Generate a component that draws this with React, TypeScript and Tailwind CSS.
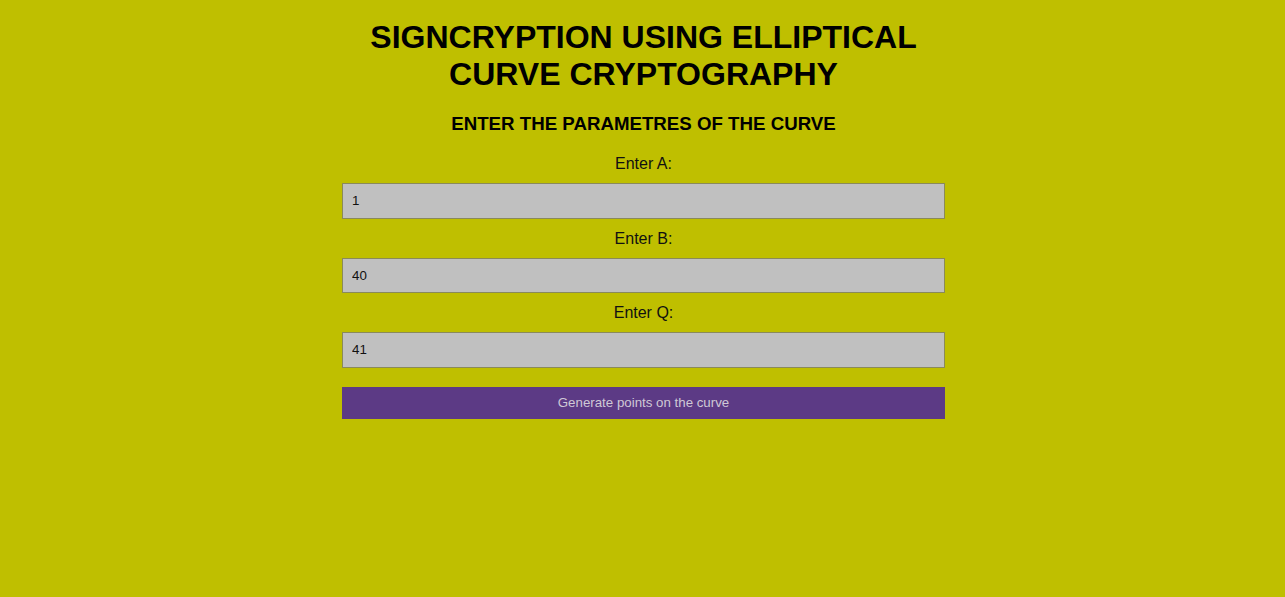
import React, { useState } from 'react';

const fields = [
    { id: 'a', label: 'Enter A:' },
    { id: 'b', label: 'Enter B:' },
    { id: 'q', label: 'Enter Q:' },
];

const App = () => {
    const [values, setValues] = useState<Record<string, string>>({ a: '1', b: '40', q: '41' });

    return (
        <div className="min-h-screen w-full bg-[#bfbf00] pl-[2px] font-['Liberation_Sans',Arial,sans-serif] text-black">
            <div className="mx-auto w-[603px] pt-[19px] text-center">
                <h1 className="text-[32px] font-bold leading-[37px]">
                    SIGNCRYPTION USING ELLIPTICAL
                    <br />
                    CURVE CRYPTOGRAPHY
                </h1>
                <h3 className="mt-[20px] text-[18.7px] font-bold leading-[22px]">ENTER THE PARAMETRES OF THE CURVE</h3>

                <form className="mt-[16px] flex flex-col" onSubmit={e => e.preventDefault()}>
                    {fields.map(f => (
                        <div key={f.id} className="flex flex-col">
                            <label htmlFor={f.id} className="mt-[4px] text-[16px] leading-[18px] text-[#111]">{f.label}</label>
                            <input
                                id={f.id}
                                value={values[f.id]}
                                onChange={e => setValues({ ...values, [f.id]: e.target.value })}
                                className="mt-[10px] mb-[7px] h-[35.5px] w-full border border-[#8a8a5a] bg-[#c0c0c0] px-[9px] text-left text-[13.3px] text-[#111] outline-none"
                            />
                        </div>
                    ))}
                    <button type="submit" className="mt-[12.5px] h-[32px] w-full bg-[#5c3a85] text-[13.3px] text-[#cfc8d6]">
                        Generate points on the curve
                    </button>
                </form>
            </div>
        </div>
    );
};

export default App;
